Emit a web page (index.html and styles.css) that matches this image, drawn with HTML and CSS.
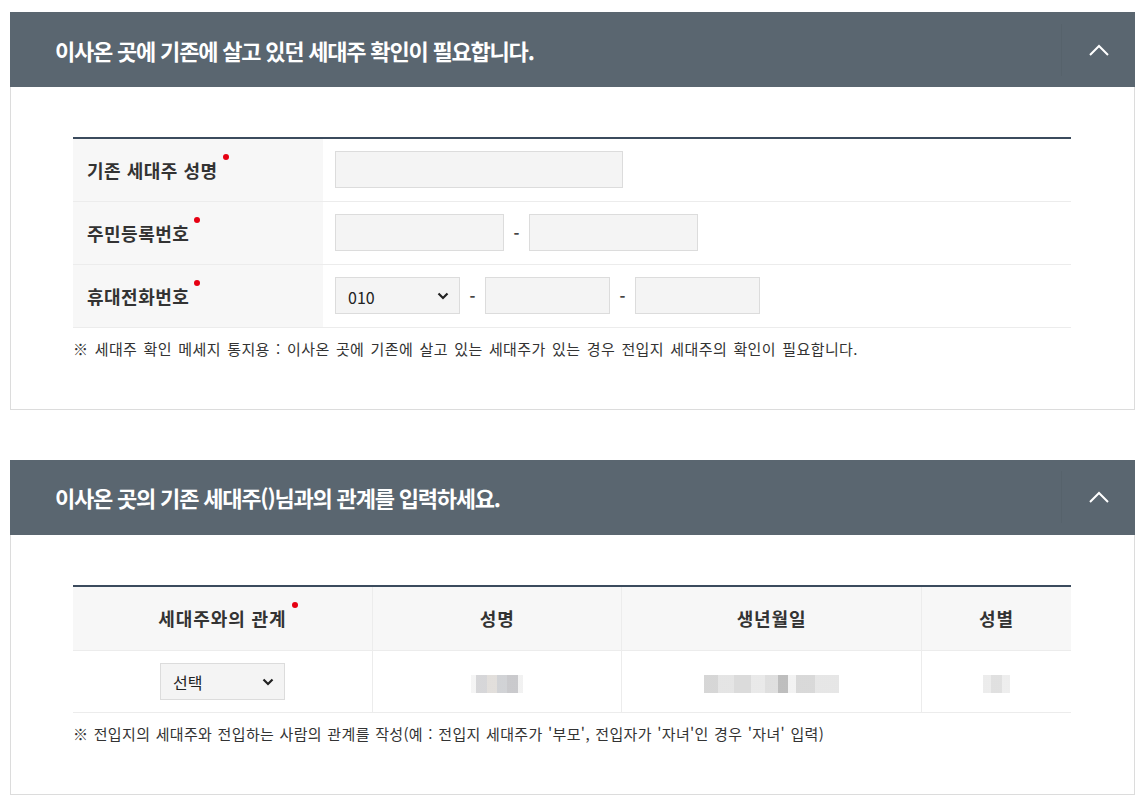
FILE: index.html
```html
<!DOCTYPE html>
<html lang="ko">
<head>
    <meta charset="UTF-8">
    <meta name="viewport" content="width=device-width, initial-scale=1.0">
    <title>세대주 확인</title>
    <link rel="stylesheet" href="styles.css">
</head>
<body>
    <section class="panel">
        <div class="panel-head">
            <h2>이사온 곳에 기존에 살고 있던 세대주 확인이 필요합니다.</h2>
            <button class="toggle" type="button" aria-label="접기">
                <svg width="22" height="14" viewBox="0 0 22 14"><path d="M2 12 L11 3 L20 12" fill="none" stroke="#fff" stroke-width="2"/></svg>
            </button>
        </div>
        <div class="panel-body">
            <table class="form-table">
                <tr>
                    <th><span class="req">기존 세대주 성명</span></th>
                    <td><input type="text" class="inp w-long"></td>
                </tr>
                <tr>
                    <th><span class="req">주민등록번호</span></th>
                    <td>
                        <div class="field-row">
                            <input type="text" class="inp w-mid">
                            <span class="dash">-</span>
                            <input type="password" class="inp w-mid">
                        </div>
                    </td>
                </tr>
                <tr>
                    <th><span class="req">휴대전화번호</span></th>
                    <td>
                        <div class="field-row">
                            <span class="sel-wrap">
                                <select class="sel">
                                    <option>010</option>
                                    <option>011</option>
                                    <option>016</option>
                                    <option>017</option>
                                </select>
                                <svg class="sel-arrow" width="12" height="8" viewBox="0 0 12 8"><path d="M1.5 1.5 L6 6 L10.5 1.5" fill="none" stroke="#222" stroke-width="2.2"/></svg>
                            </span>
                            <span class="dash">-</span>
                            <input type="text" class="inp w-short">
                            <span class="dash">-</span>
                            <input type="text" class="inp w-short">
                        </div>
                    </td>
                </tr>
            </table>
            <p class="note">※ 세대주 확인 메세지 통지용 : 이사온 곳에 기존에 살고 있는 세대주가 있는 경우 전입지 세대주의 확인이 필요합니다.</p>
        </div>
    </section>

    <section class="panel">
        <div class="panel-head">
            <h2>이사온 곳의 기존 세대주()님과의 관계를 입력하세요.</h2>
            <button class="toggle" type="button" aria-label="접기">
                <svg width="22" height="14" viewBox="0 0 22 14"><path d="M2 12 L11 3 L20 12" fill="none" stroke="#fff" stroke-width="2"/></svg>
            </button>
        </div>
        <div class="panel-body">
            <table class="list-table">
                <colgroup>
                    <col class="c-rel">
                    <col class="c-name">
                    <col class="c-birth">
                    <col class="c-sex">
                </colgroup>
                <thead>
                    <tr>
                        <th><span class="req">세대주와의 관계</span></th>
                        <th>성명</th>
                        <th>생년월일</th>
                        <th>성별</th>
                    </tr>
                </thead>
                <tbody>
                    <tr>
                        <td>
                            <span class="sel-wrap">
                                <select class="sel">
                                    <option>선택</option>
                                    <option>부모</option>
                                    <option>자녀</option>
                                    <option>배우자</option>
                                </select>
                                <svg class="sel-arrow" width="12" height="8" viewBox="0 0 12 8"><path d="M1.5 1.5 L6 6 L10.5 1.5" fill="none" stroke="#222" stroke-width="2.2"/></svg>
                            </span>
                        </td>
                        <td><span class="blur blur-name"></span></td>
                        <td><span class="blur blur-birth"></span></td>
                        <td><span class="blur blur-sex"></span></td>
                    </tr>
                </tbody>
            </table>
            <p class="note note-tight">※ 전입지의 세대주와 전입하는 사람의 관계를 작성(예 : 전입지 세대주가 '부모', 전입자가 '자녀'인 경우 '자녀' 입력)</p>
        </div>
    </section>
</body>
</html>
```

FILE: styles.css
```css
body {
    margin: 0;
    padding: 12px 12px 12px 10px;
    background: #fff;
    color: #333;
    font-family: "Noto Sans CJK KR", "Noto Sans", sans-serif;
}

.panel {
    border: 1px solid #dcdcdc;
    border-top: none;
    margin-bottom: 50px;
}

.panel:last-child {
    margin-bottom: 0;
}

.panel-head {
    display: flex;
    align-items: center;
    height: 75px;
    margin: 0 -1px;
    background: #5a6670;
}

.panel-head h2 {
    flex: 1;
    margin: 0;
    padding-left: 45px;
    color: #fff;
    font-size: 22px;
    font-weight: 700;
    letter-spacing: -1.2px;
}

.toggle {
    display: flex;
    align-items: center;
    justify-content: center;
    width: 74px;
    height: 52px;
    padding: 0;
    border: none;
    border-left: 1px solid #56626b;
    background: transparent;
    cursor: pointer;
}

.panel-body {
    padding: 50px 63px 50px 62px;
}

/* form table */
.form-table,
.list-table {
    width: 100%;
    border-collapse: collapse;
    border-top: 2px solid #3b4b5d;
}

.form-table th {
    width: 250px;
    height: 63px;
    padding: 0 14px;
    background: #f7f7f7;
    border-bottom: 1px solid #ececec;
    text-align: left;
    font-size: 18px;
    font-weight: 700;
    letter-spacing: 0.5px;
    box-sizing: border-box;
}

.form-table td {
    padding: 0 12px;
    border-bottom: 1px solid #ececec;
}

.req {
    position: relative;
}

.req::after {
    content: "";
    position: absolute;
    top: -3px;
    right: -11px;
    width: 6px;
    height: 6px;
    border-radius: 50%;
    background: #e60012;
}

.field-row {
    display: flex;
    align-items: center;
}

.inp {
    height: 37px;
    padding: 0 12px;
    border: 1px solid #dcdcdc;
    background: #f4f4f4;
    box-sizing: border-box;
    font-family: inherit;
    font-size: 15px;
}

.w-long { width: 288px; }
.w-mid { width: 169px; }
.w-short { width: 125px; }

.dash {
    width: 25px;
    text-align: center;
    font-size: 16px;
    font-weight: 700;
    color: #444;
}

.sel-wrap {
    position: relative;
    display: inline-block;
    vertical-align: middle;
}

.sel {
    appearance: none;
    -webkit-appearance: none;
    width: 125px;
    height: 37px;
    padding: 2px 12px 0;
    border: 1px solid #dcdcdc;
    background: #f4f4f4;
    color: #222;
    font-family: inherit;
    font-size: 16px;
    box-sizing: border-box;
    display: block;
}

.sel-arrow {
    position: absolute;
    right: 11px;
    top: 15px;
    pointer-events: none;
}

.note {
    margin: 10px 0 0;
    font-size: 15px;
    color: #333;
    letter-spacing: 0.4px;
    word-spacing: 1.7px;
}

.note-tight {
    letter-spacing: 0.35px;
    word-spacing: 0.8px;
}

/* list table */
.c-rel { width: 30%; }
.c-name { width: 25%; }
.c-birth { width: 30%; }
.c-sex { width: 15%; }

.list-table th {
    height: 61px;
    background: #f7f7f7;
    border-left: 1px solid #ececec;
    border-bottom: 1px solid #ececec;
    font-size: 18px;
    font-weight: 700;
    letter-spacing: 0.9px;
}

.list-table td {
    height: 59px;
    text-align: center;
    border-left: 1px solid #ececec;
    border-bottom: 1px solid #ececec;
}

.list-table th:first-child,
.list-table td:first-child {
    border-left: none;
}

.list-table .sel-wrap {
    text-align: left;
}

.blur {
    display: inline-block;
    height: 18px;
    vertical-align: middle;
    opacity: 0.75;
}

.blur-name {
    width: 52px;
    background: linear-gradient(90deg, #f1f1f1 0 10%, #c9c9cc 10% 30%, #d8d4d0 30% 50%, #c2c4c8 50% 70%, #b8b8bc 70% 90%, #ededed 90%);
}

.blur-birth {
    width: 135px;
    background: linear-gradient(90deg, #c9c9c9 0 10%, #dcdcdc 10% 22%, #cfcfcf 22% 35%, #e2e2e2 35% 45%, #d4d4d4 45% 55%, #a8a8a8 55% 62%, #eeeeee 62% 68%, #cccccc 68% 82%, #dedede 82%);
}

.blur-sex {
    width: 27px;
    background: linear-gradient(90deg, #e6e6e6 0 30%, #d6d6d6 30% 70%, #e8e8e8 70%);
}
```
